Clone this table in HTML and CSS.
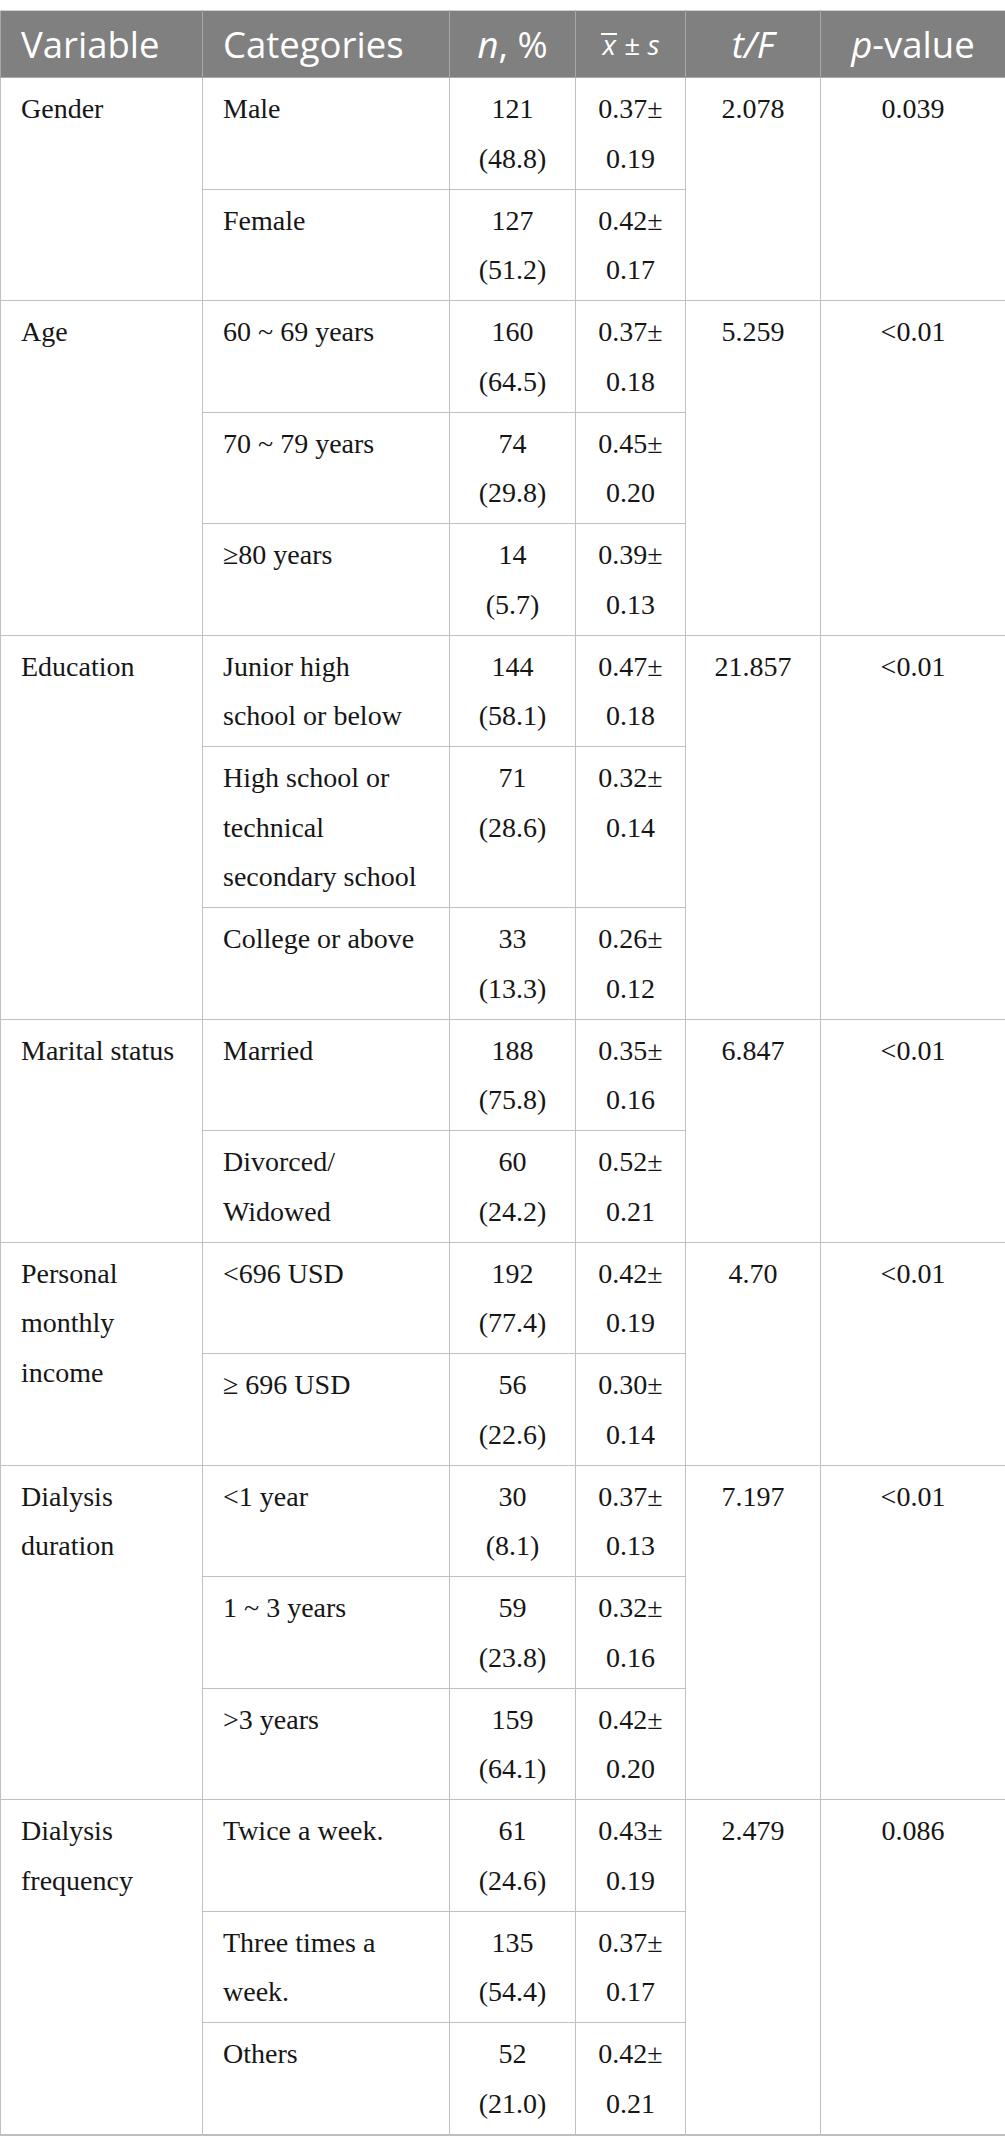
FILE: index.html
```html
<!DOCTYPE html>
<html lang="en">
<head>
<meta charset="utf-8">
<title>Table</title>
<link rel="stylesheet" href="styles.css">
</head>
<body>
<table class="data">
  <colgroup>
    <col class="c-var">
    <col class="c-cat">
    <col class="c-n">
    <col class="c-x">
    <col class="c-t">
    <col class="c-p">
  </colgroup>
  <thead>
    <tr>
      <th class="left">Variable</th>
      <th class="left">Categories</th>
      <th><i>n</i>, %</th>
      <th class="xs"><i class="xbar">x</i> ± <i>s</i></th>
      <th><i>t/F</i></th>
      <th><i>p</i>-value</th>
    </tr>
  </thead>
  <tbody>
    <tr>
      <td class="left" rowspan="2">Gender</td>
      <td class="left">Male</td>
      <td>121<br>(48.8)</td>
      <td>0.37±<br>0.19</td>
      <td rowspan="2">2.078</td>
      <td rowspan="2">0.039</td>
    </tr>
    <tr>
      <td class="left">Female</td>
      <td>127<br>(51.2)</td>
      <td>0.42±<br>0.17</td>
    </tr>

    <tr>
      <td class="left" rowspan="3">Age</td>
      <td class="left">60 ~ 69 years</td>
      <td>160<br>(64.5)</td>
      <td>0.37±<br>0.18</td>
      <td rowspan="3">5.259</td>
      <td rowspan="3">&lt;0.01</td>
    </tr>
    <tr>
      <td class="left">70 ~ 79 years</td>
      <td>74<br>(29.8)</td>
      <td>0.45±<br>0.20</td>
    </tr>
    <tr>
      <td class="left">≥80 years</td>
      <td>14<br>(5.7)</td>
      <td>0.39±<br>0.13</td>
    </tr>

    <tr>
      <td class="left" rowspan="3">Education</td>
      <td class="left">Junior high<br>school or below</td>
      <td>144<br>(58.1)</td>
      <td>0.47±<br>0.18</td>
      <td rowspan="3">21.857</td>
      <td rowspan="3">&lt;0.01</td>
    </tr>
    <tr>
      <td class="left">High school or<br>technical<br>secondary school</td>
      <td>71<br>(28.6)</td>
      <td>0.32±<br>0.14</td>
    </tr>
    <tr>
      <td class="left">College or above</td>
      <td>33<br>(13.3)</td>
      <td>0.26±<br>0.12</td>
    </tr>

    <tr>
      <td class="left" rowspan="2">Marital status</td>
      <td class="left">Married</td>
      <td>188<br>(75.8)</td>
      <td>0.35±<br>0.16</td>
      <td rowspan="2">6.847</td>
      <td rowspan="2">&lt;0.01</td>
    </tr>
    <tr>
      <td class="left">Divorced/<br>Widowed</td>
      <td>60<br>(24.2)</td>
      <td>0.52±<br>0.21</td>
    </tr>

    <tr>
      <td class="left" rowspan="2">Personal<br>monthly<br>income</td>
      <td class="left">&lt;696 USD</td>
      <td>192<br>(77.4)</td>
      <td>0.42±<br>0.19</td>
      <td rowspan="2">4.70</td>
      <td rowspan="2">&lt;0.01</td>
    </tr>
    <tr>
      <td class="left">≥ 696 USD</td>
      <td>56<br>(22.6)</td>
      <td>0.30±<br>0.14</td>
    </tr>

    <tr>
      <td class="left" rowspan="3">Dialysis<br>duration</td>
      <td class="left">&lt;1 year</td>
      <td>30<br>(8.1)</td>
      <td>0.37±<br>0.13</td>
      <td rowspan="3">7.197</td>
      <td rowspan="3">&lt;0.01</td>
    </tr>
    <tr>
      <td class="left">1 ~ 3 years</td>
      <td>59<br>(23.8)</td>
      <td>0.32±<br>0.16</td>
    </tr>
    <tr>
      <td class="left">&gt;3 years</td>
      <td>159<br>(64.1)</td>
      <td>0.42±<br>0.20</td>
    </tr>

    <tr>
      <td class="left" rowspan="3">Dialysis<br>frequency</td>
      <td class="left">Twice a week.</td>
      <td>61<br>(24.6)</td>
      <td>0.43±<br>0.19</td>
      <td rowspan="3">2.479</td>
      <td rowspan="3">0.086</td>
    </tr>
    <tr>
      <td class="left">Three times a<br>week.</td>
      <td>135<br>(54.4)</td>
      <td>0.37±<br>0.17</td>
    </tr>
    <tr>
      <td class="left">Others</td>
      <td>52<br>(21.0)</td>
      <td>0.42±<br>0.21</td>
    </tr>
  </tbody>
</table>
</body>
</html>
```

FILE: styles.css
```css
html, body {
  margin: 0;
  padding: 0;
  background: #ffffff;
}

.data {
  margin-top: 10px;
  width: 1005px;
  table-layout: fixed;
  border-collapse: collapse;
  border-bottom: 2px solid #c0c0c0;
  font-family: "Liberation Serif", "Times New Roman", serif;
  font-size: 28px;
  line-height: 49.5px;
  color: #161616;
}

.c-var { width: 202px; }
.c-cat { width: 247px; }
.c-n { width: 126px; }
.c-x { width: 110px; }
.c-t { width: 135px; }
.c-p { width: 185px; }

.data th {
  background: #808080;
  color: #ffffff;
  font-family: "Open Sans", "Noto Sans", sans-serif;
  font-weight: 400;
  font-size: 36.5px;
  line-height: 40px;
  height: 67px;
  padding: 0 20px;
  box-sizing: border-box;
  text-align: center;
  vertical-align: middle;
  border: 1px solid #a8a8a8;
  border-top-color: #d0d0d0;
  white-space: nowrap;
}

.data th.xs {
  font-size: 28px;
  padding: 0;
}

.xbar {
  display: inline-block;
  line-height: 19px;
  border-top: 2px solid #ffffff;
  padding: 0 1px;
}

.data td {
  padding: 6px 8px 5.5px;
  text-align: center;
  vertical-align: top;
  border: 1px solid #c0c0c0;
}

.data th.left,
.data td.left {
  text-align: left;
  padding-left: 20px;
  padding-right: 8px;
}
```
